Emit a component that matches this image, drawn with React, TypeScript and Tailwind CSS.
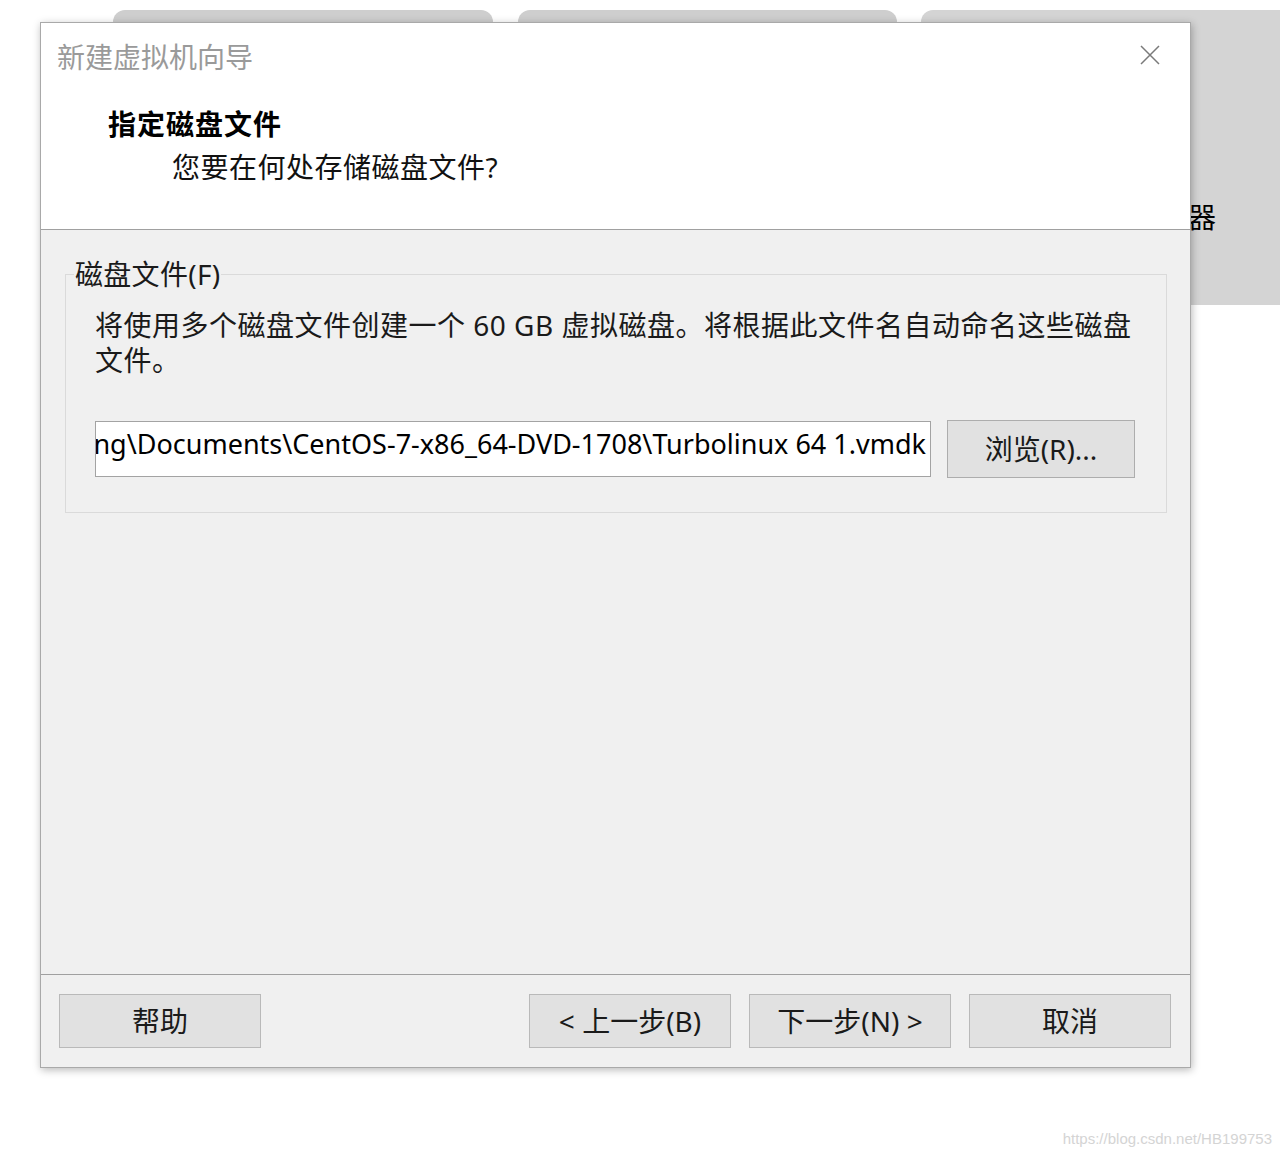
const btn = 'flex h-[54px] w-[202px] items-center justify-center border border-[#b9b9b9] bg-[#e1e1e1] text-[28px] leading-none text-[#1a1a1a]'

export default function App() {
  return (
    <div className="relative h-[1158px] w-[1280px] overflow-hidden bg-white font-['Noto_Sans','Noto_Sans_CJK_SC',sans-serif]">
      {/* windows behind the dialog */}
      <div className="absolute left-[113px] top-[10px] h-[60px] w-[380px] rounded-t-[12px] bg-[#cecece]" />
      <div className="absolute left-[518px] top-[10px] h-[60px] w-[379px] rounded-t-[12px] bg-[#cecece]" />
      <div className="absolute left-[921px] top-[10px] h-[295px] w-[380px] rounded-tl-[12px] bg-[#d4d4d4]">
        <span className="absolute left-[267px] top-[193px] text-[28px] leading-[28px] text-black">器</span>
      </div>

      {/* wizard dialog */}
      <div className="absolute left-[40px] top-[22px] flex h-[1046px] w-[1151px] flex-col border border-[#a9a9a9] bg-[#f0f0f0] shadow-[1px_2px_8px_rgba(0,0,0,0.28)]">
        <div className="flex h-[67px] shrink-0 items-center justify-between bg-white pl-[16px] pr-[30px]">
          <span className="text-[28px] leading-none text-[#9a9a9a]">新建虚拟机向导</span>
          <svg width="20" height="20" viewBox="0 0 20 20" className="mt-[-3px]">
            <path d="M1 1L19 19M19 1L1 19" stroke="#7a7a7a" strokeWidth="1.5" fill="none" />
          </svg>
        </div>

        <div className="h-[140px] shrink-0 border-b border-[#a0a0a0] bg-white pl-[67px] pt-[18px]">
          <div className="text-[28px] font-bold leading-[32px] tracking-[1px] text-black">指定磁盘文件</div>
          <div className="ml-[64px] mt-[11px] text-[28px] leading-[32px] tracking-[0.5px] text-[#111]">您要在何处存储磁盘文件?</div>
        </div>

        <div className="flex-1 pl-[24px] pr-[23px] pt-[30px]">
          <fieldset className="border border-[#dadada] pb-[34px]">
            <legend className="ml-[8px] px-[1px] text-[28px] leading-[28px] tracking-[0.3px] text-[#1a1a1a]">磁盘文件(F)</legend>
            <div className="px-[29px]">
              <p className="mt-[20px] text-[28px] leading-[35px] tracking-[0.5px] text-[#1a1a1a]">
                将使用多个磁盘文件创建一个 60 GB 虚拟磁盘。将根据此文件名自动命名这些磁盘文件。
              </p>
              <div className="mt-[42px] flex items-center gap-[16px]">
                <div className="flex h-[56px] w-[836px] items-center justify-end overflow-hidden border border-[#a3a3a3] bg-white pb-[12px] pr-[4px]">
                  <span className="whitespace-nowrap text-[27px] leading-none text-black">
                    C:\Users\Huang\Documents\CentOS-7-x86_64-DVD-1708\Turbolinux 64 1.vmdk
                  </span>
                </div>
                <button className="flex h-[58px] w-[188px] items-center justify-center border border-[#adadad] bg-[#e1e1e1] text-[28px] leading-none text-[#1a1a1a]">
                  浏览(R)...
                </button>
              </div>
            </div>
          </fieldset>
        </div>

        <div className="flex h-[93px] shrink-0 items-center border-t border-[#a0a0a0] pl-[18px] pr-[19px]">
          <button className={btn}>帮助</button>
          <div className="ml-auto flex gap-[18px]">
            <button className={btn}>&lt; 上一步(B)</button>
            <button className={btn}>下一步(N) &gt;</button>
            <button className={btn}>取消</button>
          </div>
        </div>
      </div>

      <span className="absolute right-[8px] top-[1131px] font-['Liberation_Sans',sans-serif] text-[15px] leading-none text-[#d4d4d4]">
        https://blog.csdn.net/HB199753
      </span>
    </div>
  )
}
